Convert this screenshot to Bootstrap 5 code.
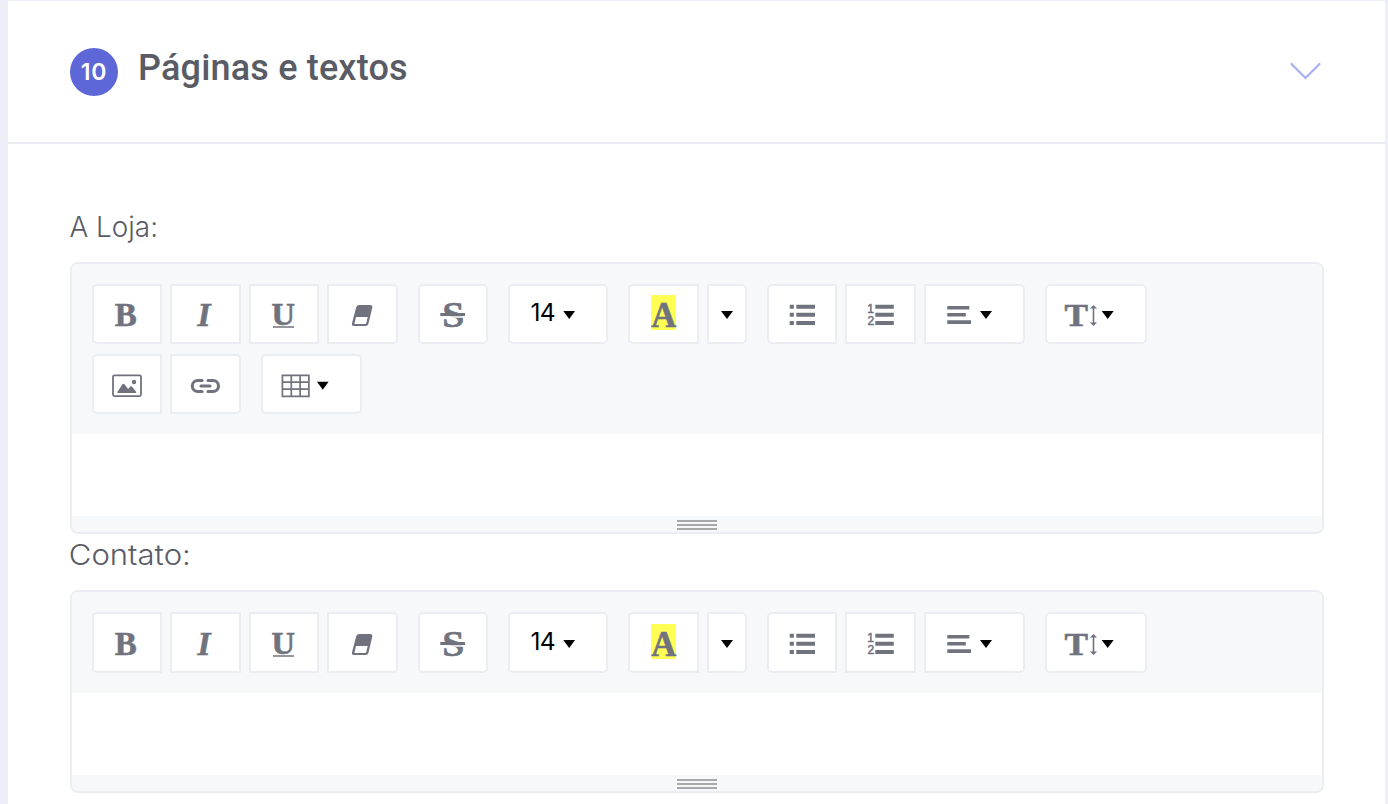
<!DOCTYPE html>
<html lang="pt-BR">
<head>
<meta charset="utf-8">
<meta name="viewport" content="width=device-width, initial-scale=1">
<title>Páginas e textos</title>
<link href="https://cdn.jsdelivr.net/npm/bootstrap@5.3.0/dist/css/bootstrap.min.css" rel="stylesheet">
<style>
  body { background: #eeeef8; font-family: Inter, "Liberation Sans", sans-serif; overflow: hidden; height: 804px; }
  .panel { margin: 1px 3px 0 8px; min-height: 803px; border: 0; border-radius: 0; }
  .panel-head { height: 143px; padding: 0 64px 0 62px; border-bottom: 2px solid #ebedf2; }
  .step { width: 48px; height: 48px; margin-top: 47px; background: #5d67d8; font: 600 23px/48px Inter, sans-serif; letter-spacing: .8px; }
  .panel-title { margin: 45px 0 0 20px; font: 500 36px/44px Roboto, sans-serif; letter-spacing: .18px; color: #595b65; }
  .chevron { margin-top: 60px; }
  .panel-content { padding: 61px 61px 0 62px; }
  .field-label { display: block; height: 57px; font-size: 28px; font-weight: 300; color: #595b65; }
  .field-label.next { height: 56px; }
  .field-label svg { display: block; }
  .editor { border: 2px solid #ebedf2; border-radius: 8px; overflow: hidden; }
  .tools { background: #f7f8fa; padding: 20px; row-gap: 10px; column-gap: 20px; }
  .second-row { column-gap: 20px; }
  .tools .group { display: flex; gap: 8px; }
  .tool { display: flex; align-items: flex-end; padding: 0; border: 2px solid #ebedf2; border-radius: 0; background: #fff; color: #70737e; height: 60px; }
  .tool:hover { border-color: #ebedf2; }
  .group .tool:first-child { border-top-left-radius: 5px; border-bottom-left-radius: 5px; }
  .group .tool:last-child { border-top-right-radius: 5px; border-bottom-right-radius: 5px; }
  .tall .tool { height: 61px; }
  .writing { height: 82px; background: #fff; }
  .grip { height: 16px; background: #f7f8fa; padding-top: 4px; }
  .grip i { display: block; width: 40px; height: 2px; margin: 0 auto 2px; background: #a9a9a9; }
  .serif { font-family: "Liberation Serif", serif; font-weight: 700; stroke: currentColor; stroke-width: .6; }
</style>
</head>
<body>
<svg width="0" height="0" class="d-none">
  <defs>
    <symbol id="i-bold" viewBox="2 2 66 56"><text class="serif" x="22.7" y="42" font-size="33.5" fill="currentColor" textLength="22" lengthAdjust="spacingAndGlyphs">B</text></symbol>
    <symbol id="i-italic" viewBox="2 2 67 56"><text class="serif" x="27.6" y="42" font-size="33.5" font-style="italic" fill="currentColor">I</text></symbol>
    <symbol id="i-underline" viewBox="2 2 66 56"><text class="serif" x="22.5" y="40.8" font-size="30.5" fill="currentColor" textLength="23.5" lengthAdjust="spacingAndGlyphs">U</text><path d="M24 43h21" stroke="currentColor" stroke-width="1.6"/></symbol>
    <symbol id="i-eraser" viewBox="2 2 67 56"><path fill="currentColor" fill-rule="evenodd" d="M32.5 21H43.2Q46 21 45.2 24L41.5 39.5Q40.9 42 38.5 42H27Q24.3 42 25 39.3L29.2 23.3Q29.9 21 32.5 21ZM29 33L27.4 40H38.1Q39 40 39.3 39L40.7 33Z"/></symbol>
    <symbol id="i-strike" viewBox="2 2 66 56"><text class="serif" x="24.3" y="42.8" font-size="36" fill="currentColor" textLength="22" lengthAdjust="spacingAndGlyphs">S</text><path d="M22 33h25" stroke="#fff" stroke-width="1.6"/><path d="M22.3 30.5h24.7" stroke="currentColor" stroke-width="3.2"/></symbol>
    <symbol id="i-size" viewBox="2 2 96 56"><text x="22.6" y="37" font-family="Inter, sans-serif" font-size="24.5" fill="#000" textLength="25">14</text><path d="M55.3 27H67l-5.8 8z" fill="#000"/></symbol>
    <symbol id="i-color" viewBox="2 2 67 56"><path fill="#ffff54" d="M23 11h25v35H23z"/><text class="serif" x="23.3" y="43" font-size="35" fill="currentColor" textLength="25" lengthAdjust="spacingAndGlyphs">A</text></symbol>
    <symbol id="i-more" viewBox="2 2 36 56"><path d="M14 27h12l-6 8z" fill="#000"/></symbol>
    <symbol id="i-ul" viewBox="2 2 66 56"><path fill="currentColor" d="M22.7 20.7h4.2v4.1h-4.2zM29.3 20.7H48v4.1H29.3zM22.7 28.7h4.2v4.1h-4.2zM29.3 28.7H48v4.1H29.3zM22.7 36.9h4.2V41h-4.2zM29.3 36.9H48V41H29.3z"/></symbol>
    <symbol id="i-ol" viewBox="2 2 67 56"><path fill="currentColor" d="M30.3 20.7h18.5v4.1H30.3zM30.3 28.7h18.5v4.1H30.3zM30.3 36.9h18.5V41H30.3z"/><g font-family="Liberation Sans, sans-serif" font-size="12" fill="currentColor" stroke="currentColor" stroke-width=".5"><text x="22.3" y="28.8">1</text><text x="22.5" y="41">2</text></g></symbol>
    <symbol id="i-align" viewBox="2 2 97 56"><path fill="currentColor" d="M23.3 21.9h22v3.6h-22zM23.3 29h18.5v3.6H23.3zM23.3 36.3H47v3.6H23.3z"/><path d="M56 27h12l-6 8z" fill="#000"/></symbol>
    <symbol id="i-height" viewBox="2 2 98 56"><text class="serif" x="19.4" y="42" font-size="31.5" fill="currentColor" textLength="23.5" lengthAdjust="spacingAndGlyphs">T</text><path d="M48.5 23v17" stroke="currentColor" stroke-width="1.6"/><path d="M48.5 21l3.6 3.6h-7.2zM48.5 42l3.6-3.6h-7.2z" fill="currentColor"/><path d="M56.7 27h12l-6 8z" fill="#000"/></symbol>
    <symbol id="i-image" viewBox="2 2 66 56"><rect x="21" y="21.3" width="28" height="20.8" rx="1.5" fill="none" stroke="currentColor" stroke-width="1.8"/><path fill="currentColor" d="M25.5 39v-1.3l4.8-7.2q1.2-1.6 2.4 0l3.4 4.4 2-2.2q1-1 2 0l4 5V39z"/><circle cx="42" cy="28" r="2.2" fill="currentColor"/></symbol>
    <symbol id="i-link" viewBox="2 2 67 56"><path fill="none" stroke="currentColor" stroke-width="3.1" stroke-linecap="round" d="M32.1 26.5h-4.3a5.5 5.5 0 0 0 0 11h4.3M38 26.5h5a5.5 5.5 0 0 1 0 11h-5M31 32h9"/></symbol>
    <symbol id="i-table" viewBox="2 2 97 56"><path fill="none" stroke="currentColor" stroke-width="1.7" d="M21.4 21.3h26.5v21H21.4zM30.3 21.3v21M39.1 21.3v21M21.4 28.2h26.5M21.4 35.2h26.5"/><path d="M56 27.7h11.6l-5.8 8z" fill="#000"/></symbol>
  </defs>
</svg>

<main class="card panel">
  <header class="panel-head d-flex align-items-start">
    <span class="step rounded-circle text-white text-center">10</span>
    <h1 class="panel-title">Páginas e textos</h1>
    <svg class="chevron ms-auto" width="32" height="20" fill="none" stroke="#a9aff4" stroke-width="2.2" stroke-linecap="round"><path d="M2.5 3l14 14 14-14"/></svg>
  </header>
  <section class="panel-content">
    <label class="field-label"><svg width="130" height="42" overflow="visible" fill="currentColor"><text x="-.5" y="31.5" textLength="88.5" lengthAdjust="spacingAndGlyphs">A Loja:</text></svg></label>
    <div class="editor">
      <div class="tools d-flex flex-wrap">
        <div class="group">
          <button class="btn tool" aria-label="Negrito"><svg width="66" height="56"><use href="#i-bold"/></svg></button>
          <button class="btn tool" aria-label="Itálico"><svg width="67" height="56"><use href="#i-italic"/></svg></button>
          <button class="btn tool" aria-label="Sublinhado"><svg width="66" height="56"><use href="#i-underline"/></svg></button>
          <button class="btn tool" aria-label="Limpar"><svg width="67" height="56"><use href="#i-eraser"/></svg></button>
        </div>
        <div class="group"><button class="btn tool" aria-label="Riscado"><svg width="66" height="56"><use href="#i-strike"/></svg></button></div>
        <div class="group"><button class="btn tool" aria-label="Tamanho"><svg width="96" height="56"><use href="#i-size"/></svg></button></div>
        <div class="group">
          <button class="btn tool" aria-label="Cor"><svg width="67" height="56"><use href="#i-color"/></svg></button>
          <button class="btn tool" aria-label="Mais cores"><svg width="36" height="56"><use href="#i-more"/></svg></button>
        </div>
        <div class="group">
          <button class="btn tool" aria-label="Lista"><svg width="66" height="56"><use href="#i-ul"/></svg></button>
          <button class="btn tool" aria-label="Lista numerada"><svg width="67" height="56"><use href="#i-ol"/></svg></button>
          <button class="btn tool" aria-label="Alinhamento"><svg width="97" height="56"><use href="#i-align"/></svg></button>
        </div>
        <div class="group"><button class="btn tool" aria-label="Altura da linha"><svg width="98" height="56"><use href="#i-height"/></svg></button></div>
        <div class="w-100 d-flex second-row">
          <div class="group">
            <button class="btn tool" aria-label="Imagem"><svg width="66" height="56"><use href="#i-image"/></svg></button>
            <button class="btn tool" aria-label="Link"><svg width="67" height="56"><use href="#i-link"/></svg></button>
          </div>
          <div class="group"><button class="btn tool" aria-label="Tabela"><svg width="97" height="56"><use href="#i-table"/></svg></button></div>
        </div>
      </div>
      <div class="writing"></div>
      <div class="grip"><i></i><i></i><i></i></div>
    </div>

    <label class="field-label next"><svg width="130" height="42" overflow="visible" fill="currentColor"><text x="-1.2" y="30.5" textLength="122" lengthAdjust="spacingAndGlyphs">Contato:</text></svg></label>
    <div class="editor">
      <div class="tools tall d-flex flex-wrap">
        <div class="group">
          <button class="btn tool" aria-label="Negrito"><svg width="66" height="56"><use href="#i-bold"/></svg></button>
          <button class="btn tool" aria-label="Itálico"><svg width="67" height="56"><use href="#i-italic"/></svg></button>
          <button class="btn tool" aria-label="Sublinhado"><svg width="66" height="56"><use href="#i-underline"/></svg></button>
          <button class="btn tool" aria-label="Limpar"><svg width="67" height="56"><use href="#i-eraser"/></svg></button>
        </div>
        <div class="group"><button class="btn tool" aria-label="Riscado"><svg width="66" height="56"><use href="#i-strike"/></svg></button></div>
        <div class="group"><button class="btn tool" aria-label="Tamanho"><svg width="96" height="56"><use href="#i-size"/></svg></button></div>
        <div class="group">
          <button class="btn tool" aria-label="Cor"><svg width="67" height="56"><use href="#i-color"/></svg></button>
          <button class="btn tool" aria-label="Mais cores"><svg width="36" height="56"><use href="#i-more"/></svg></button>
        </div>
        <div class="group">
          <button class="btn tool" aria-label="Lista"><svg width="66" height="56"><use href="#i-ul"/></svg></button>
          <button class="btn tool" aria-label="Lista numerada"><svg width="67" height="56"><use href="#i-ol"/></svg></button>
          <button class="btn tool" aria-label="Alinhamento"><svg width="97" height="56"><use href="#i-align"/></svg></button>
        </div>
        <div class="group"><button class="btn tool" aria-label="Altura da linha"><svg width="98" height="56"><use href="#i-height"/></svg></button></div>
      </div>
      <div class="writing"></div>
      <div class="grip"><i></i><i></i><i></i></div>
    </div>
  </section>
</main>
<script src="https://cdn.jsdelivr.net/npm/bootstrap@5.3.0/dist/js/bootstrap.bundle.min.js"></script>
</body>
</html>
